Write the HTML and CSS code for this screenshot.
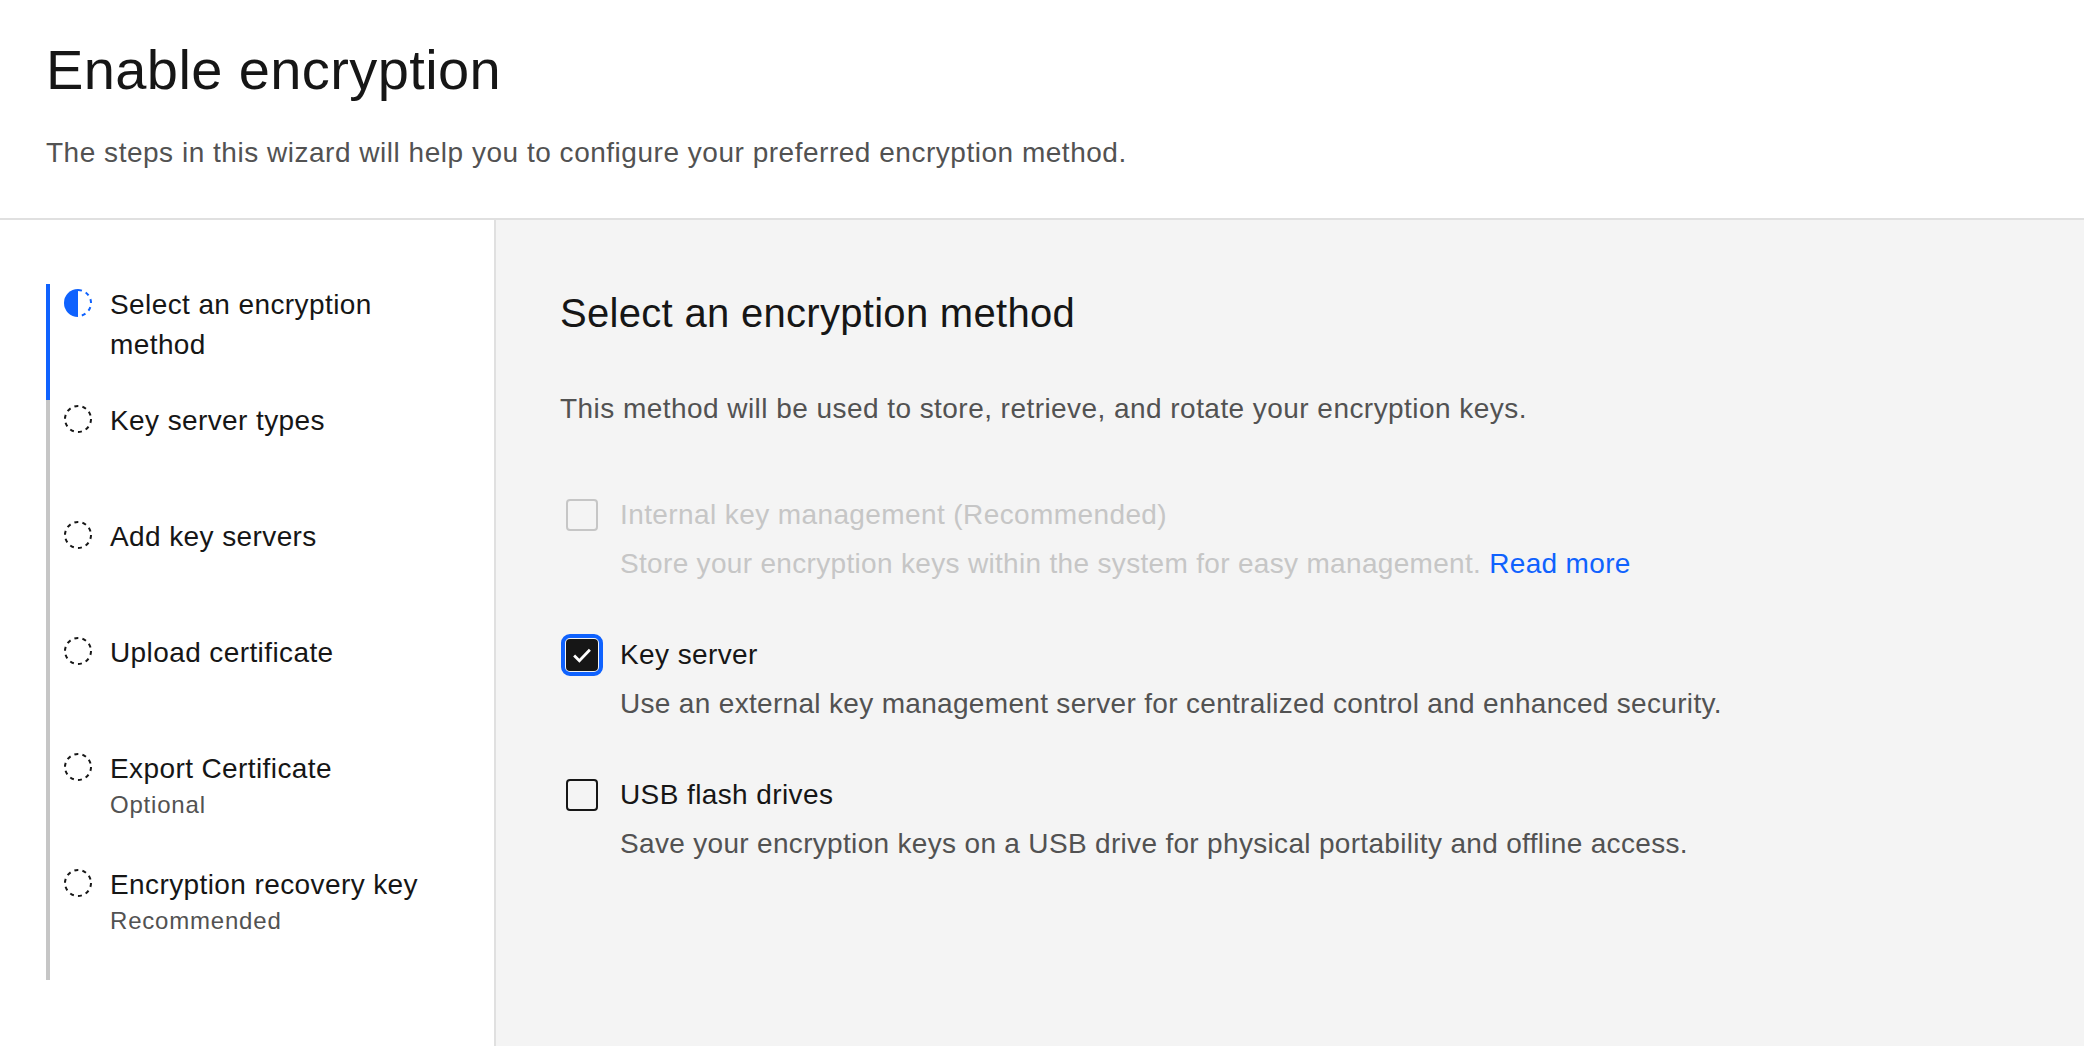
FILE: index.html
```html
<!DOCTYPE html>
<html lang="en">
<head>
<meta charset="utf-8">
<title>Enable encryption</title>
<link rel="stylesheet" href="styles.css">
</head>
<body>
<header class="header">
  <h1 class="title">Enable encryption</h1>
  <p class="subtitle">The steps in this wizard will help you to configure your preferred encryption method.</p>
</header>
<div class="main">
  <nav class="sidebar">
    <ul class="steps">
      <li class="step current">
        <svg class="step-icon" viewBox="0 0 32 32"><path d="M16 2 A14 14 0 0 0 16 30 Z" fill="#0f62fe"/><path d="M16 3 A13 13 0 0 1 16 29" fill="none" stroke="#0f62fe" stroke-width="2" stroke-dasharray="4 4.17"/></svg>
        <div class="step-text"><span class="step-label">Select an encryption method</span></div>
      </li>
      <li class="step">
        <svg class="step-icon" viewBox="0 0 32 32"><circle cx="16" cy="16" r="13" fill="none" stroke="#161616" stroke-width="2" stroke-dasharray="4 4.17"/></svg>
        <div class="step-text"><span class="step-label">Key server types</span></div>
      </li>
      <li class="step">
        <svg class="step-icon" viewBox="0 0 32 32"><circle cx="16" cy="16" r="13" fill="none" stroke="#161616" stroke-width="2" stroke-dasharray="4 4.17"/></svg>
        <div class="step-text"><span class="step-label">Add key servers</span></div>
      </li>
      <li class="step">
        <svg class="step-icon" viewBox="0 0 32 32"><circle cx="16" cy="16" r="13" fill="none" stroke="#161616" stroke-width="2" stroke-dasharray="4 4.17"/></svg>
        <div class="step-text"><span class="step-label">Upload certificate</span></div>
      </li>
      <li class="step">
        <svg class="step-icon" viewBox="0 0 32 32"><circle cx="16" cy="16" r="13" fill="none" stroke="#161616" stroke-width="2" stroke-dasharray="4 4.17"/></svg>
        <div class="step-text"><span class="step-label">Export Certificate</span><span class="step-sub">Optional</span></div>
      </li>
      <li class="step">
        <svg class="step-icon" viewBox="0 0 32 32"><circle cx="16" cy="16" r="13" fill="none" stroke="#161616" stroke-width="2" stroke-dasharray="4 4.17"/></svg>
        <div class="step-text"><span class="step-label">Encryption recovery key</span><span class="step-sub">Recommended</span></div>
      </li>
    </ul>
  </nav>
  <section class="content">
    <h2 class="heading">Select an encryption method</h2>
    <p class="desc">This method will be used to store, retrieve, and rotate your encryption keys.</p>
    <div class="options">
      <div class="option disabled">
        <div class="option-row">
          <span class="box"></span>
          <span class="option-label">Internal key management (Recommended)</span>
        </div>
        <p class="option-desc">Store your encryption keys within the system for easy management. <a class="link" href="#">Read more</a></p>
      </div>
      <div class="option">
        <div class="option-row">
          <span class="box checked focused"><svg viewBox="0 0 32 32" class="check"><path d="M7 16.5 L13 22.5 L25 10" fill="none" stroke="#ffffff" stroke-width="3.2"/></svg></span>
          <span class="option-label">Key server</span>
        </div>
        <p class="option-desc">Use an external key management server for centralized control and enhanced security.</p>
      </div>
      <div class="option">
        <div class="option-row">
          <span class="box"></span>
          <span class="option-label">USB flash drives</span>
        </div>
        <p class="option-desc">Save your encryption keys on a USB drive for physical portability and offline access.</p>
      </div>
    </div>
  </section>
</div>
</body>
</html>
```
FILE: styles.css
```css
* { box-sizing: border-box; }
html, body { margin: 0; padding: 0; }
body {
  font-family: "Liberation Sans", Arial, sans-serif;
  color: #161616;
  background: #ffffff;
  width: 2084px;
  height: 1046px;
  overflow: hidden;
  display: flex;
  flex-direction: column;
}
.header {
  padding: 34px 46px 45px;
  border-bottom: 2px solid #e0e0e0;
}
.title {
  margin: 0;
  font-size: 56px;
  line-height: 72px;
  font-weight: 400;
  letter-spacing: 0.4px;
  color: #161616;
}
.subtitle {
  margin: 27px 0 0;
  font-size: 28px;
  line-height: 40px;
  letter-spacing: 0.52px;
  color: #525252;
}
.main {
  flex: 1;
  display: flex;
}
.sidebar {
  width: 496px;
  border-right: 2px solid #e0e0e0;
  padding: 64px 0 0 46px;
}
.steps {
  list-style: none;
  margin: 0;
  padding: 0;
}
.step {
  height: 116px;
  border-left: 4px solid #c6c6c6;
  display: flex;
  align-items: flex-start;
}
.step.current { border-left-color: #0f62fe; }
.step-icon {
  width: 32px;
  height: 32px;
  flex: none;
  margin: 3px 16px 0 12px;
}
.step-text {
  display: flex;
  flex-direction: column;
  max-width: 340px;
  padding-top: 1px;
}
.step-label {
  font-size: 28px;
  line-height: 40px;
  letter-spacing: 0.4px;
  color: #161616;
}
.step-sub {
  font-size: 24px;
  line-height: 32px;
  letter-spacing: 0.8px;
  color: #525252;
}
.content {
  flex: 1;
  background: #f4f4f4;
  padding: 65px 64px;
}
.heading {
  margin: 0;
  font-size: 40px;
  line-height: 56px;
  font-weight: 400;
  letter-spacing: 0.3px;
  color: #161616;
}
.desc {
  margin: 48px 0 0;
  font-size: 28px;
  line-height: 40px;
  letter-spacing: 0.45px;
  color: #525252;
}
.options {
  margin-top: 66px;
}
.option {
  margin-bottom: 51px;
}
.option-row {
  display: flex;
  align-items: center;
  height: 40px;
}
.box {
  width: 32px;
  height: 32px;
  margin-left: 6px;
  margin-right: 22px;
  border: 2px solid #161616;
  border-radius: 4px;
  flex: none;
  display: flex;
  align-items: center;
  justify-content: center;
}
.box.checked {
  background: #161616;
}
.box.focused {
  outline: 4px solid #0f62fe;
  outline-offset: 1px;
}
.check {
  width: 28px;
  height: 28px;
}
.option-label {
  font-size: 28px;
  line-height: 40px;
  letter-spacing: 0.4px;
  color: #161616;
}
.option-desc {
  margin: 9px 0 0 60px;
  font-size: 28px;
  line-height: 40px;
  letter-spacing: 0.32px;
  color: #525252;
}
.disabled .box { border-color: #c6c6c6; }
.disabled .option-label,
.disabled .option-desc { color: #c6c6c6; }
.link {
  color: #0f62fe;
  text-decoration: none;
}
```
